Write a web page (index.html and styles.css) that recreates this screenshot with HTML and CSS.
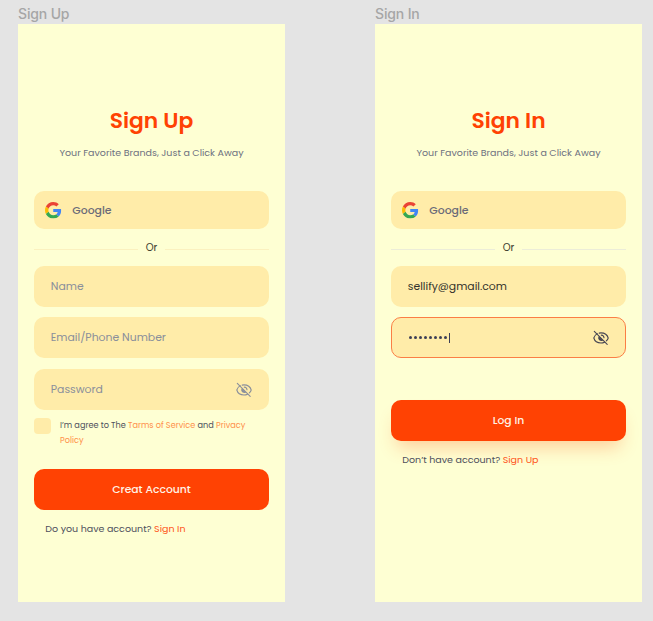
FILE: index.html
```html
<!DOCTYPE html>
<html lang="en">
<head>
<meta charset="utf-8">
<title>Sign Up / Sign In</title>
<link rel="stylesheet" href="styles.css">
</head>
<body>
<svg class="defs" width="0" height="0" aria-hidden="true">
  <symbol id="google" viewBox="0 0 48 48">
    <path fill="#EA4335" d="M24 9.5c3.54 0 6.71 1.22 9.21 3.6l6.85-6.85C35.9 2.38 30.47 0 24 0 14.62 0 6.51 5.38 2.56 13.22l7.98 6.19C12.43 13.72 17.74 9.5 24 9.5z"/>
    <path fill="#4285F4" d="M46.98 24.55c0-1.57-.15-3.09-.38-4.55H24v9.02h12.94c-.58 2.96-2.26 5.48-4.78 7.18l7.73 6c4.51-4.18 7.09-10.36 7.09-17.65z"/>
    <path fill="#FBBC05" d="M10.53 28.59c-.48-1.45-.76-2.99-.76-4.59s.27-3.14.76-4.59l-7.98-6.19C.92 16.46 0 20.12 0 24s.92 7.54 2.56 10.78l7.97-6.19z"/>
    <path fill="#34A853" d="M24 48c6.48 0 11.93-2.13 15.89-5.81l-7.73-6c-2.15 1.45-4.92 2.3-8.16 2.3-6.26 0-11.57-4.22-13.47-9.91l-7.98 6.19C6.51 42.62 14.62 48 24 48z"/>
  </symbol>
  <symbol id="eye-off" viewBox="0 0 16 16">
    <g fill="none" stroke="currentColor" stroke-width="1.1" stroke-linecap="round">
      <path d="M4.200 3.600C2.500 4.700 1.200 6.400.8 8c.8 2.800 3.700 5 7.200 5 1.300 0 2.500-.3 3.500-.8M6.200 3.100C6.800 3 7.400 2.900 8 2.900c3.500 0 6.400 2.200 7.200 5.100-.3 1.100-1 2.100-1.900 2.900"/>
      <path d="M8.300 5.100c1.500.1 2.600 1.300 2.700 2.700"/>
      <path d="M1.300 1.400l12.900 13"/>
    </g>
    <path fill="currentColor" d="M5.900 6.200l4.200 4.400c-1.700 1.100-4 .3-4.700-1.500-.4-1-.1-2.200.5-2.900z"/>
  </symbol>
</svg>
<main class="board">
  <section class="frame">
    <div class="frame-label">Sign Up</div>
    <div class="screen">
      <h1 class="title">Sign Up</h1>
      <p class="tagline">Your Favorite Brands, Just a Click Away</p>
      <div class="google"><svg class="g-icon"><use href="#google"/></svg><span>Google</span></div>
      <div class="divider"><span class="or">Or</span></div>
      <div class="field">Name</div>
      <div class="field low">Email/Phone Number</div>
      <div class="field low last"><span>Password</span><svg class="eye"><use href="#eye-off"/></svg></div>
      <div class="terms">
        <i class="check"></i>
        <p>I’m agree to The <a>Tarms of Service</a> and <a>Privacy</a><br><a>Policy</a></p>
      </div>
      <div class="button create">Creat Account</div>
      <p class="foot">Do you have account? <a>Sign In</a></p>
    </div>
  </section>
  <section class="frame">
    <div class="frame-label">Sign In</div>
    <div class="screen signin">
      <h1 class="title">Sign In</h1>
      <p class="tagline">Your Favorite Brands, Just a Click Away</p>
      <div class="google"><svg class="g-icon"><use href="#google"/></svg><span>Google</span></div>
      <div class="divider"><span class="or">Or</span></div>
      <div class="field filled">sellify@gmail.com</div>
      <div class="field last active"><span class="dots"><i></i><i></i><i></i><i></i><i></i><i></i><i></i><i></i><b></b></span><svg class="eye"><use href="#eye-off"/></svg></div>
      <div class="button login">Log In</div>
      <p class="foot">Don’t have account? <a>Sign Up</a></p>
    </div>
  </section>
</main>
</body>
</html>
```
FILE: styles.css
```css
* { box-sizing: border-box; }
body {
  margin: 0;
  height: 621px;
  overflow: hidden;
  background: #e4e4e4;
  font-family: Poppins, Inter, sans-serif;
}
h1, p { margin: 0; }
.defs { position: absolute; }
.board { display: flex; gap: 90px; padding-left: 18px; }
.frame { width: 267px; flex: none; }
.frame-label {
  height: 24px;
  font: 500 14px/28px Inter, sans-serif;
  letter-spacing: -0.15px;
  color: #a6a6a6;
  white-space: nowrap;
}
.screen {
  height: 578px;
  padding: 81px 16px 0;
  background: #feffd3;
  white-space: nowrap;
}
.title {
  height: 32px;
  line-height: 32px;
  font-size: 21.8px;
  font-weight: 600;
  text-align: center;
  color: #ff4203;
}
.tagline {
  height: 16px;
  margin-top: 8px;
  line-height: 16px;
  font-size: 9.5px;
  text-align: center;
  color: #6d7180;
}
.google {
  display: flex;
  align-items: center;
  height: 38px;
  margin-top: 30px;
  padding: 1px 0 0 11px;
  border-radius: 10px;
  background: #ffeca9;
  color: #6a6a78;
  font-size: 10.9px;
  font-weight: 500;
}
.g-icon { width: 16.5px; height: 16.5px; margin-right: 10.8px; }
.divider {
  display: flex;
  align-items: center;
  gap: 8px;
  height: 37px;
  font-size: 10px;
  color: #3c3a2c;
}
.divider::before, .divider::after {
  content: "";
  flex: 1;
  height: 1px;
  margin-top: 3px;
  background: #fbf1bf;
}
.signin .divider::before, .signin .divider::after { background: #ecedd8; }
.field {
  display: flex;
  align-items: center;
  justify-content: space-between;
  height: 41px;
  margin-bottom: 10.4px;
  padding: 0 17px 0 16.8px;
  border-radius: 10px;
  background: #ffeca9;
  color: #8a8f9b;
  font-size: 10.85px;
}
.low { padding-top: 1px; }
.last { margin-bottom: 0; }
.filled { color: #34332c; }
.active { border: 1px solid #fb7e45; padding: 0 16px; color: #474653; }
.eye { width: 16px; height: 16px; }
.dots { display: flex; align-items: center; gap: 2px; padding-left: 0.8px; }
.dots i { width: 3px; height: 3px; border-radius: 50%; background: #3d3f56; }
.dots b { width: 1px; height: 10px; background: #3d3f56; }
.terms {
  display: flex;
  gap: 9.5px;
  height: 59.4px;
  padding-top: 8px;
  font-size: 8.17px;
  line-height: 15px;
  color: #4d4f5c;
}
.check { width: 16.5px; height: 16.5px; border-radius: 4px; background: #ffeca9; }
.terms a { color: #ff914b; }
.button {
  display: flex;
  align-items: center;
  justify-content: center;
  height: 41px;
  border-radius: 10px;
  background: #ff4203;
  color: #fff3e6;
  font-size: 10.8px;
  font-weight: 500;
}
.create { padding-top: 1px; }
.login { margin-top: 42px; padding-top: 1px; box-shadow: 0 12px 18px -6px rgba(255, 100, 30, .32); }
.foot { margin-top: 9.5px; padding-left: 11.3px; font-size: 9.5px; line-height: 17px; color: #4d4f5c; }
.foot a { color: #ff5319; }
```
